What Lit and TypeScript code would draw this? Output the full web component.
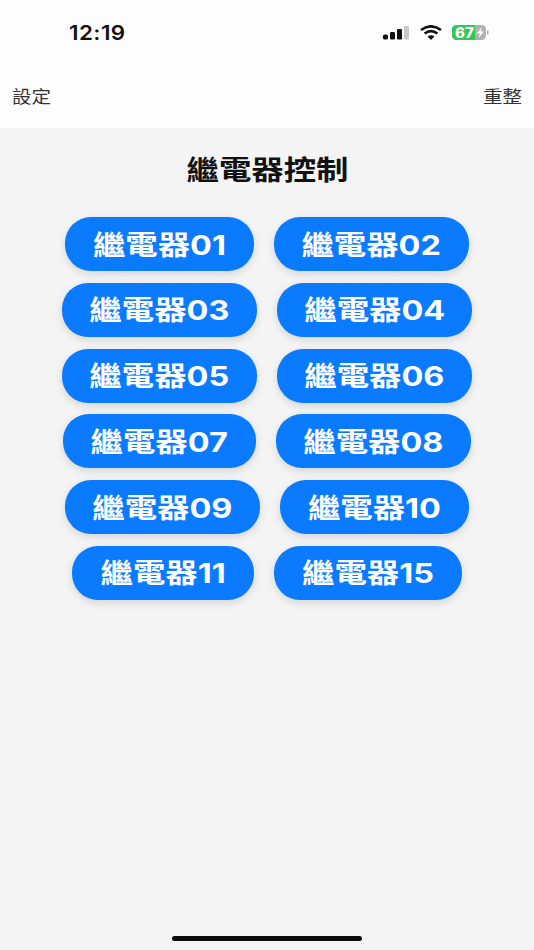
import { LitElement, html, css } from "lit";
import { customElement } from "lit/decorators.js";

const ROWS = [
  ["01", "02"],
  ["03", "04"],
  ["05", "06"],
  ["07", "08"],
  ["09", "10"],
  ["11", "15"],
];

@customElement("app-root")
export class AppRoot extends LitElement {
  static styles = css`
    :host {
      display: flex;
      flex-direction: column;
      width: 534px;
      height: 950px;
      background: #f4f4f4;
      font-family: "Inter", "Noto Sans CJK TC", sans-serif;
      overflow: hidden;
    }
    .top {
      height: 128px;
      background: #fefdfe;
      display: flex;
      flex-direction: column;
      flex: none;
    }
    .status {
      height: 65px;
      padding: 0 44px 0 69px;
      display: flex;
      align-items: center;
      justify-content: space-between;
    }
    .time {
      display: inline-block;
      transform: scaleX(1.12);
      transform-origin: left center;
      font-size: 20px;
      font-weight: 600;
      color: #111;
      letter-spacing: 0.4px;
    }
    .icons { display: flex; align-items: center; gap: 10px; }
    .icons svg { display: block; }
    .batt {
      position: relative;
      width: 38px;
      height: 15px;
    }
    .batt span {
      position: absolute;
      left: 3px;
      top: -1px;
      font-size: 15px;
      line-height: 17px;
      font-weight: 800;
      color: #fff;
    }
    .nav {
      display: flex;
      justify-content: space-between;
      padding: 0 12px;
      font-size: 17px;
      line-height: 24px;
      margin-top: 20px;
      color: #333;
    }
    .nav span { display: inline-block; transform: scaleX(1.15); }
    .nav .l { transform-origin: left center; }
    .nav .r { transform-origin: right center; }
    .title {
      text-align: center;
      margin-top: 25px;
      font-size: 27px;
      line-height: 36px;
      font-weight: 700;
      color: #111;
    }
    .title span { display: inline-block; transform: scaleX(1.2); }
    .grid {
      margin-top: 28px;
      display: flex;
      flex-direction: column;
      gap: 11.8px;
    }
    .row { display: flex; justify-content: center; gap: 20px; }
    .btn {
      box-sizing: border-box;
      height: 54px;
      padding: 0 39px 2px;
      border-radius: 26px;
      background: #0a7aff;
      box-shadow: 0 3px 8px rgba(0, 0, 0, 0.13);
      color: #fff;
      font-size: 27px;
      font-weight: 700;
      display: flex;
      align-items: center;
      justify-content: center;
    }
    .btn span { display: inline-block; transform: scaleX(1.2); white-space: nowrap; }
    .spacer { flex: 1; }
    .home {
      width: 190px;
      height: 5px;
      border-radius: 3px;
      background: #0a0a0a;
      margin: 0 auto 9px;
    }
  `;

  render() {
    return html`
      <div class="top">
        <div class="status">
          <span class="time">12:19</span>
          <div class="icons">
            <svg width="27" height="15" viewBox="0 0 27 15">
              <rect x="0" y="9.5" width="5" height="5" rx="1.5" fill="#111" />
              <rect x="7" y="7" width="5" height="7.5" rx="1.2" fill="#111" />
              <rect x="14" y="4" width="5" height="10.5" rx="1.2" fill="#111" />
              <rect x="21" y="1" width="5" height="13.5" rx="1.2" fill="#c8c8c8" />
            </svg>
            <svg width="22" height="15" viewBox="0 0 22 15" fill="none" stroke="#111" stroke-width="2.6">
              <path d="M1 5 Q11 -2.4 21 5" />
              <path d="M4.6 8.6 Q11 3.6 17.4 8.6" />
              <path d="M7.6 11.6 L11 15 L14.4 11.6 Q11 9 7.6 11.6 Z" fill="#111" stroke="none" />
            </svg>
            <div class="batt">
              <svg width="38" height="15" viewBox="0 0 38 15">
                <rect x="0" y="0" width="34" height="15" rx="4.5" fill="#b0b0b0" />
                <path d="M4.5 0 H23 V15 H4.5 A4.5 4.5 0 0 1 0 10.5 V4.5 A4.5 4.5 0 0 1 4.5 0 Z" fill="#33c658" />
                <path d="M30 2 L24.5 8.5 H28 L26.5 13 L32 6.5 H28.5 Z" fill="#fff" />
                <rect x="35" y="5" width="1.5" height="5" rx="0.7" fill="#b5b5b5" />
              </svg>
              <span>67</span>
            </div>
          </div>
        </div>
        <div class="nav"><span class="l">設定</span><span class="r">重整</span></div>
      </div>
      <div class="title"><span>繼電器控制</span></div>
      <div class="grid">
        ${ROWS.map(
          (r) => html`<div class="row">
            ${r.map((n) => html`<div class="btn"><span>繼電器${n}</span></div>`)}
          </div>`
        )}
      </div>
      <div class="spacer"></div>
      <div class="home"></div>
    `;
  }
}
